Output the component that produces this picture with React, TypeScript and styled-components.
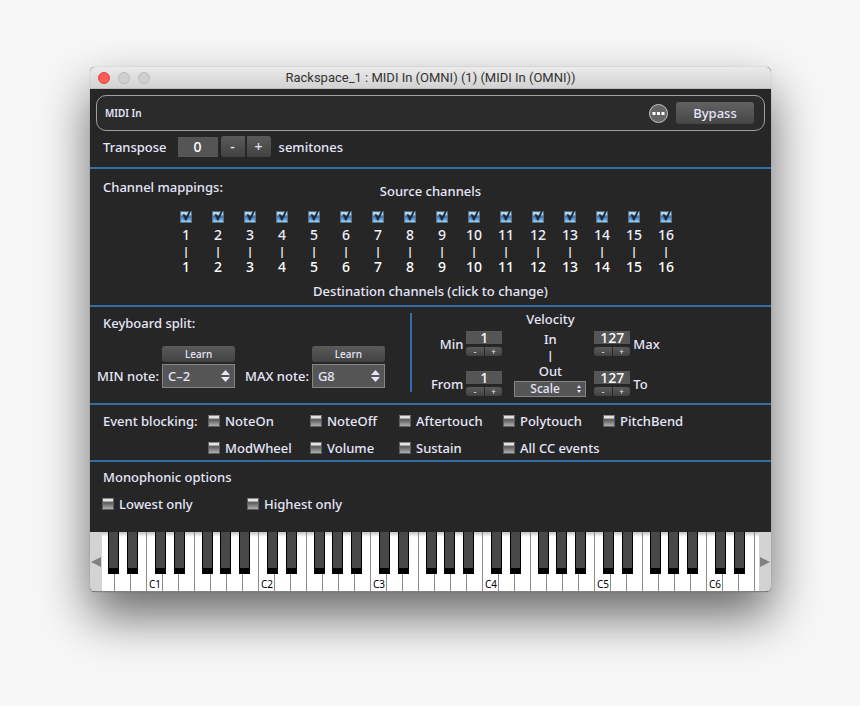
import React from 'react';
import styled, { createGlobalStyle } from 'styled-components';

const ink = '#e6e6fa';
const blue = '#336ea6';
const face = '"Noto Sans", "Liberation Sans", sans-serif';

const GlobalStyle = createGlobalStyle`
  *, *::before, *::after { box-sizing: border-box; }
  body { margin: 0; background: #f7f7f7; }
  button, input, select { margin: 0; padding: 0; border: 0; font: inherit; color: inherit; }
`;

const Page = styled.main`
  padding: 67px 89px 114px 90px;
  font: 500 13px/18px ${face};
  color: ${ink};
`;

const Window = styled.section`
  border-radius: 5px;
  background: #262626;
  overflow: hidden;
  box-shadow: 0 0 1px rgba(0, 0, 0, 0.4), 0 24px 50px rgba(0, 0, 0, 0.58);
`;

const TitleBar = styled.header`
  display: grid;
  grid-template-columns: 60px 1fr 60px;
  align-items: center;
  height: 22px;
  padding: 0 8px;
  background: linear-gradient(#ebebeb, #d2d2d2);
  border-bottom: 1px solid #b9bfba;
`;

const Lights = styled.div`
  display: flex;
  gap: 8px;
`;

const Light = styled.button<{ $active?: boolean }>`
  width: 12px;
  height: 12px;
  border-radius: 50%;
  background: ${(p) => (p.$active ? '#fb5e56' : '#d0d0d0')};
  border: 1px solid ${(p) => (p.$active ? '#e2453f' : '#b9b9b9')};
`;

const WindowTitle = styled.h1`
  margin: 0;
  text-align: center;
  font: 400 13px/20px Roboto, Inter, sans-serif;
  color: #333;
  white-space: nowrap;
`;

const Panel = styled.section`
  border-bottom: 2px solid ${blue};
`;

const TopPanel = styled(Panel)`
  padding: 6px 6px 10px;
`;

const PluginBar = styled.div`
  display: flex;
  align-items: center;
  gap: 8px;
  height: 36px;
  padding: 0 10px 0 8px;
  border: 1px solid #a0a0a0;
  border-radius: 10px;
  background: #2b2b2b;
`;

const PluginName = styled.span`
  flex: 1;
  font-size: 10px;
  font-weight: 600;
`;

const MoreButton = styled.button`
  display: flex;
  width: 19px;
  height: 19px;
  border-radius: 50%;
  background: #666;
  border: 1px solid #c4c4c4;
  align-items: center;
  justify-content: center;
`;

const raised = `
  background: linear-gradient(#5a5a5a, #424242);
  color: ${ink};
  display: flex;
  align-items: center;
  justify-content: center;
`;

const BypassButton = styled.button`
  ${raised}
  width: 78px;
  height: 22px;
  border-radius: 3px;
  background: linear-gradient(#626262, #464646);
`;

const TransposeRow = styled.div`
  display: flex;
  align-items: center;
  height: 21px;
  margin-top: 5px;
  padding-left: 7px;
`;

const TransposeInput = styled.input`
  width: 40px;
  height: 20px;
  margin: 0 3px 0 11px;
  background: #555;
  color: #fff;
  text-align: center;
  font-size: 14px;
`;

const StepGroup = styled.div<{ $mini?: boolean }>`
  display: flex;
  gap: ${(p) => (p.$mini ? 1 : 2)}px;
  margin-right: ${(p) => (p.$mini ? 0 : 8)}px;
`;

const Step = styled.button<{ $mini?: boolean }>`
  ${raised}
  flex: ${(p) => (p.$mini ? '1' : 'none')};
  width: ${(p) => (p.$mini ? 17 : 24)}px;
  height: ${(p) => (p.$mini ? 9 : 21)}px;
  font-size: ${(p) => (p.$mini ? 8 : 14)}px;
  line-height: ${(p) => (p.$mini ? 9 : 20)}px;
  &:first-child { border-radius: 3px 0 0 3px; }
  &:last-child { border-radius: 0 3px 3px 0; }
`;

const ChannelPanel = styled(Panel)`
  padding: 9px 0 5px;
`;

const ChannelHeading = styled.div`
  display: grid;
  height: 22px;
  margin-bottom: 11px;
  & > * { grid-area: 1 / 1; }
`;

const Label = styled.span`
  white-space: nowrap;
`;

const SectionLabel = styled(Label)`
  padding-left: 13px;
`;

const SourceLabel = styled(Label)`
  align-self: end;
  text-align: center;
`;

const DestinationLabel = styled(Label)`
  display: block;
  margin-top: 7px;
  text-align: center;
`;

const ChannelGrid = styled.div`
  display: grid;
  grid-template-columns: repeat(16, 1fr);
  padding: 0 89px 0 80px;
`;

const Channel = styled.div`
  display: flex;
  flex-direction: column;
  align-items: center;
  font-size: 14px;
  line-height: 16px;
  color: #f0f0fa;
`;

const ChannelLabel = styled.label`
  display: flex;
  flex-direction: column;
  align-items: center;
  gap: 4px;
`;

const CheckBox = styled.span`
  display: grid;
  width: 12px;
  height: 12px;
  & > * { grid-area: 1 / 1; }
  svg { pointer-events: none; overflow: visible; }
`;

const CheckInput = styled.input`
  appearance: none;
  width: 12px;
  height: 12px;
  border: 1px solid #5e5e5e;
  border-top-color: #8a8a8a;
  background: linear-gradient(#dedede 0, #e6e6e6 15%, #5c5c5c 36%, #7c7c7c 62%, #b0b0b0 100%);
  &:checked {
    border-color: #56717f;
    background: linear-gradient(#9cc0e4 0, #d4e6f8 20%, #3474b4 42%, #4f90d0 66%, #a8d0f8 100%);
  }
`;

const Pipe = styled.span`
  font-size: 11px;
  font-weight: 700;
  line-height: 16px;
`;

const DestinationButton = styled.button`
  background: none;
  color: #fff;
  line-height: 16px;
`;

const SplitPanel = styled(Panel)`
  display: flex;
  height: 98px;
`;

const SplitSide = styled.div`
  flex: none;
  width: 320px;
  padding-top: 7px;
`;

const Divider = styled.div`
  width: 2px;
  margin: 6px 0 11px;
  background: ${blue};
`;

const NoteFields = styled.div`
  display: flex;
  gap: 10px;
  margin-top: 14px;
  padding-left: 7px;
`;

const NoteField = styled.div`
  display: flex;
  align-items: flex-end;
  gap: 3px;
`;

const NoteLabel = styled.label`
  line-height: 24px;
  white-space: nowrap;
`;

const NoteStack = styled.div`
  display: flex;
  flex-direction: column;
  gap: 2px;
  width: 73px;
`;

const LearnButton = styled.button`
  ${raised}
  height: 16px;
  border-radius: 3px;
  font-size: 10px;
  line-height: 16px;
`;

const SelectBox = styled.span`
  display: grid;
  align-items: center;
  & > * { grid-area: 1 / 1; }
  svg { justify-self: end; margin-right: 5px; pointer-events: none; }
`;

const Select = styled.select<{ $small?: boolean }>`
  appearance: none;
  width: 100%;
  height: ${(p) => (p.$small ? 16 : 24)}px;
  padding-left: ${(p) => (p.$small ? 15 : 5)}px;
  border: 1px solid #858585;
  background: #555;
  font-size: ${(p) => (p.$small ? 12 : 13)}px;
  line-height: ${(p) => (p.$small ? 14 : 22)}px;
`;

const Velocity = styled.div`
  display: flex;
  padding-left: 19px;
`;

const VelocitySide = styled.div`
  display: flex;
  flex-direction: column;
  gap: 15px;
  padding-top: 24px;
`;

const VelocityField = styled.div<{ $flip?: boolean }>`
  display: flex;
  flex-direction: ${(p) => (p.$flip ? 'row-reverse' : 'row')};
  align-items: center;
  justify-content: flex-end;
  gap: 3px;
  height: 25px;
  label { min-width: 30px; text-align: ${(p) => (p.$flip ? 'left' : 'right')}; }
`;

const VelocityStack = styled.div`
  display: flex;
  flex-direction: column;
  gap: 3px;
  width: 36px;
`;

const VelocityInput = styled.input`
  width: 36px;
  height: 13px;
  background: #555;
  color: #fff;
  font-size: 14px;
  line-height: 13px;
  text-align: center;
`;

const VelocityCenter = styled.div`
  display: flex;
  flex-direction: column;
  align-items: center;
  width: 72px;
  margin: 0 8px 0 12px;
  padding-top: 3px;
  select { width: 72px; }
`;

const FlowText = styled.span`
  line-height: 20px;
`;

const InText = styled(FlowText)`
  margin-top: 1px;
`;

const FlowPipe = styled.span`
  font-size: 11px;
  font-weight: 700;
  line-height: 12px;
`;

const EventPanel = styled(Panel)`
  display: flex;
  padding: 7px 0 3px 13px;
`;

const EventLabel = styled(Label)`
  width: 105px;
`;

const EventGrid = styled.div`
  display: grid;
  grid-template-columns: 102px 89px 104px 100px auto;
  row-gap: 9px;
`;

const Option = styled.label`
  display: flex;
  align-items: center;
  gap: 5px;
  white-space: nowrap;
`;

const MonoPanel = styled.section`
  padding: 6px 0 19px;
`;

const MonoOptions = styled.div`
  display: grid;
  grid-template-columns: 145px auto;
  margin-top: 9px;
  padding-left: 12px;
`;

const Keyboard = styled.div`
  display: flex;
  height: 60px;
  border-bottom: 1px solid #808080;
`;

const ScrollButton = styled.button`
  display: flex;
  align-items: center;
  justify-content: center;
  flex: none;
  width: 12px;
  background: #d3d3d3;
`;

const Keys = styled.div`
  flex: 1;
  display: flex;
  overflow: hidden;
  background: #fff;
`;

const Strip = styled.div`
  display: flex;
  flex: none;
  margin-left: -4px;
`;

const KeySlot = styled.div`
  position: relative;
  flex: none;
  width: 16px;
`;

const WhiteKey = styled.button`
  display: flex;
  align-items: flex-end;
  width: 16px;
  height: 100%;
  padding-left: 2px;
  border-left: 1px solid #8c8c8c;
  background: linear-gradient(#c4c4c4, #fff 5px);
  color: #000;
  font-size: 10px;
  font-weight: 400;
  line-height: 14px;
`;

const BlackKey = styled.button<{ $shift: number }>`
  position: absolute;
  z-index: 1;
  top: 0;
  left: ${(p) => p.$shift}px;
  width: 11px;
  height: 42px;
  background: #484848;
  border: solid #000;
  border-width: 0 1px 6px;
`;

const sharpShift: Record<string, number> = { C: 9, D: 12, F: 8, G: 10, A: 13 };
const scale = ['C', 'D', 'E', 'F', 'G', 'A', 'B'];
const whiteKeys = Array.from({ length: 42 }, (_, i) => {
  const n = i + 4;
  return { note: scale[n % 7], octave: Math.floor(n / 7) };
});

const channels = Array.from({ length: 16 }, (_, i) => i + 1);
const events = ['NoteOn', 'NoteOff', 'Aftertouch', 'Polytouch', 'PitchBend', 'ModWheel', 'Volume', 'Sustain', 'All CC events'];

function Check({ checked = false }: { checked?: boolean }) {
  const [on, setOn] = React.useState(checked);
  return (
    <CheckBox>
      <CheckInput type="checkbox" checked={on} onChange={() => setOn(!on)} />
      {on && (
        <svg width="12" height="12" viewBox="0 0 12 12" aria-hidden="true">
          <path d="M2.4 3.2 L4.6 3.2 L6 5.6 L9.4 -0.6 L11.2 -0.6 L6.6 9.4 L5.2 9.4 Z" fill="#222b33" />
        </svg>
      )}
    </CheckBox>
  );
}

function Arrows({ small = false }: { small?: boolean }) {
  return small ? (
    <svg width="4" height="8" viewBox="0 0 4 8" aria-hidden="true">
      <path d="M0 3 L2 0 L4 3 Z M0 5 L2 8 L4 5 Z" fill={ink} />
    </svg>
  ) : (
    <svg width="9" height="12" viewBox="0 0 9 12" aria-hidden="true">
      <path d="M0 5 L4.5 0 L9 5 Z M0 7 L4.5 12 L9 7 Z" fill={ink} />
    </svg>
  );
}

function NotePicker({ id, label, value }: { id: string; label: string; value: string }) {
  return (
    <NoteField>
      <NoteLabel htmlFor={id}>{label}</NoteLabel>
      <NoteStack>
        <LearnButton type="button">Learn</LearnButton>
        <SelectBox>
          <Select id={id} defaultValue={value}>
            <option>{value}</option>
          </Select>
          <Arrows />
        </SelectBox>
      </NoteStack>
    </NoteField>
  );
}

function VelocityValue({ id, label, value, flip }: { id: string; label: string; value: string; flip?: boolean }) {
  return (
    <VelocityField $flip={flip}>
      <label htmlFor={id}>{label}</label>
      <VelocityStack>
        <VelocityInput id={id} defaultValue={value} />
        <StepGroup $mini>
          <Step $mini type="button">-</Step>
          <Step $mini type="button">+</Step>
        </StepGroup>
      </VelocityStack>
    </VelocityField>
  );
}

export default function App() {
  return (
    <Page>
      <GlobalStyle />
      <Window>
        <TitleBar>
          <Lights>
            <Light $active aria-label="Close" />
            <Light aria-label="Minimize" />
            <Light aria-label="Zoom" />
          </Lights>
          <WindowTitle>Rackspace_1 : MIDI In (OMNI) (1) (MIDI In (OMNI))</WindowTitle>
        </TitleBar>

        <TopPanel>
          <PluginBar>
            <PluginName>MIDI In</PluginName>
            <MoreButton type="button" aria-label="More">
              <svg width="13" height="3" viewBox="0 0 13 3" aria-hidden="true">
                <path d="M0.5 0h3v3h-3z M5 0h3v3h-3z M9.5 0h3v3h-3z" fill="#fff" />
              </svg>
            </MoreButton>
            <BypassButton type="button">Bypass</BypassButton>
          </PluginBar>
          <TransposeRow>
            <label htmlFor="transpose">Transpose</label>
            <TransposeInput id="transpose" defaultValue="0" />
            <StepGroup>
              <Step type="button">-</Step>
              <Step type="button">+</Step>
            </StepGroup>
            <Label>semitones</Label>
          </TransposeRow>
        </TopPanel>

        <ChannelPanel>
          <ChannelHeading>
            <SectionLabel>Channel mappings:</SectionLabel>
            <SourceLabel>Source channels</SourceLabel>
          </ChannelHeading>
          <ChannelGrid>
            {channels.map((n) => (
              <Channel key={n}>
                <ChannelLabel>
                  <Check checked />
                  {n}
                </ChannelLabel>
                <Pipe>|</Pipe>
                <DestinationButton type="button">{n}</DestinationButton>
              </Channel>
            ))}
          </ChannelGrid>
          <DestinationLabel>Destination channels (click to change)</DestinationLabel>
        </ChannelPanel>

        <SplitPanel>
          <SplitSide>
            <SectionLabel>Keyboard split:</SectionLabel>
            <NoteFields>
              <NotePicker id="min-note" label="MIN note:" value="C–2" />
              <NotePicker id="max-note" label="MAX note:" value="G8" />
            </NoteFields>
          </SplitSide>
          <Divider />
          <Velocity>
            <VelocitySide>
              <VelocityValue id="vel-min" label="Min" value="1" />
              <VelocityValue id="vel-from" label="From" value="1" />
            </VelocitySide>
            <VelocityCenter>
              <Label>Velocity</Label>
              <InText>In</InText>
              <FlowPipe>|</FlowPipe>
              <FlowText as="label" htmlFor="vel-curve">Out</FlowText>
              <SelectBox>
                <Select $small id="vel-curve" defaultValue="Scale">
                  <option>Scale</option>
                </Select>
                <Arrows small />
              </SelectBox>
            </VelocityCenter>
            <VelocitySide>
              <VelocityValue flip id="vel-max" label="Max" value="127" />
              <VelocityValue flip id="vel-to" label="To" value="127" />
            </VelocitySide>
          </Velocity>
        </SplitPanel>

        <EventPanel>
          <EventLabel>Event blocking:</EventLabel>
          <EventGrid>
            {events.map((name) => (
              <Option key={name}>
                <Check />
                {name}
              </Option>
            ))}
          </EventGrid>
        </EventPanel>

        <MonoPanel>
          <SectionLabel>Monophonic options</SectionLabel>
          <MonoOptions>
            <Option><Check />Lowest only</Option>
            <Option><Check />Highest only</Option>
          </MonoOptions>
        </MonoPanel>

        <Keyboard>
          <ScrollButton type="button" aria-label="Lower octaves">
            <svg width="10" height="10" viewBox="0 0 10 10" aria-hidden="true">
              <path d="M10 0 L0 5 L10 10 Z" fill="#828282" />
            </svg>
          </ScrollButton>
          <Keys>
            <Strip>
              {whiteKeys.map(({ note, octave }) => (
                <KeySlot key={note + octave}>
                  <WhiteKey type="button" aria-label={note + octave}>
                    {note === 'C' ? note + octave : ''}
                  </WhiteKey>
                  {sharpShift[note] !== undefined && (
                    <BlackKey type="button" $shift={sharpShift[note]} aria-label={`${note}#${octave}`} />
                  )}
                </KeySlot>
              ))}
            </Strip>
          </Keys>
          <ScrollButton type="button" aria-label="Higher octaves">
            <svg width="10" height="10" viewBox="0 0 10 10" aria-hidden="true">
              <path d="M0 0 L10 5 L0 10 Z" fill="#828282" />
            </svg>
          </ScrollButton>
        </Keyboard>
      </Window>
    </Page>
  );
}
